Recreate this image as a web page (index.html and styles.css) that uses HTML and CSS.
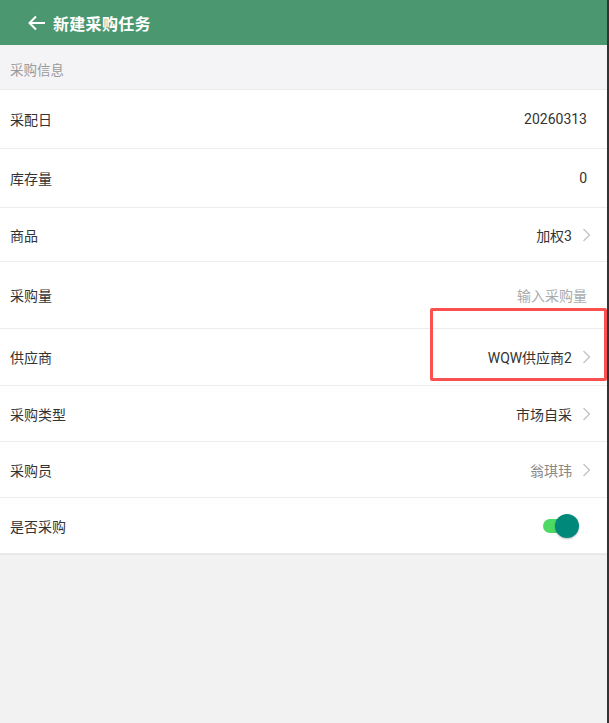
FILE: index.html
```html
<!DOCTYPE html>
<html lang="zh-CN">
<head>
  <meta charset="UTF-8" />
  <title>新建采购任务</title>
  <link rel="stylesheet" href="styles.css">
</head>
<body>
<div class="screen">
  <div class="topbar">
    <svg class="back" width="18" height="16" viewBox="0 0 18 16">
      <path d="M17 8H2M8 1.5L1.5 8L8 14.5" fill="none" stroke="#fff" stroke-width="2"/>
    </svg>
    <span class="title">新建采购任务</span>
  </div>

  <div class="section">采购信息</div>

  <div class="form">
    <div class="row h59">
      <span class="label">采配日</span>
      <span class="value">20260313</span>
    </div>
    <div class="row h59">
      <span class="label">库存量</span>
      <span class="value">0</span>
    </div>
    <div class="row h54">
      <span class="label">商品</span>
      <span class="value link">加权3<svg class="chev" width="9" height="14" viewBox="0 0 9 14"><path d="M1.5 1l6 6-6 6" fill="none" stroke="#c4c4c4" stroke-width="1.4"/></svg></span>
    </div>
    <div class="row h67">
      <span class="label">采购量</span>
      <span class="value hint">输入采购量</span>
    </div>
    <div class="row h57">
      <span class="label">供应商</span>
      <span class="value link">WQW供应商2<svg class="chev" width="9" height="14" viewBox="0 0 9 14"><path d="M1.5 1l6 6-6 6" fill="none" stroke="#c4c4c4" stroke-width="1.4"/></svg></span>
    </div>
    <div class="row h56">
      <span class="label">采购类型</span>
      <span class="value link">市场自采<svg class="chev" width="9" height="14" viewBox="0 0 9 14"><path d="M1.5 1l6 6-6 6" fill="none" stroke="#c4c4c4" stroke-width="1.4"/></svg></span>
    </div>
    <div class="row h56">
      <span class="label">采购员</span>
      <span class="value link muted">翁琪玮<svg class="chev" width="9" height="14" viewBox="0 0 9 14"><path d="M1.5 1l6 6-6 6" fill="none" stroke="#c4c4c4" stroke-width="1.4"/></svg></span>
    </div>
    <div class="row h56">
      <span class="label">是否采购</span>
      <span class="switch"><span class="knob"></span></span>
    </div>

    <div class="mark"></div>
  </div>
</div>
<div class="edge"></div>
</body>
</html>
```

FILE: styles.css
```css
body {
  margin: 0;
  background-color: #f2f2f2;
  font-family: Roboto, "Noto Sans CJK SC", sans-serif;
  color: #333;
  display: flex;
  min-height: 723px;
}
.screen {
  width: 607px;
  background-color: #f2f2f2;
}
.edge {
  width: 2px;
  background-color: #333;
}
.topbar {
  height: 45px;
  background-color: #4b9870;
  display: flex;
  align-items: center;
  padding-left: 28px;
  gap: 7px;
  box-shadow: 0 1px 2px rgba(0, 0, 0, 0.12);
}
.topbar .back {
  display: block;
}
.title {
  color: #fff;
  font-size: 16px;
  font-weight: bold;
  letter-spacing: 0.3px;
}
.section {
  height: 45px;
  background-color: #f4f4f7;
  color: #999;
  font-size: 13.5px;
  display: flex;
  align-items: center;
  padding: 4px 0 0 10px;
  border-bottom: 1px solid #ebebeb;
  box-sizing: border-box;
}
.form {
  position: relative;
  background-color: #fff;
  border-bottom: 1px solid #e6e6e6;
}
.row {
  display: flex;
  align-items: center;
  justify-content: space-between;
  padding: 0 20px 0 10px;
  border-bottom: 1px solid #ececec;
  box-sizing: border-box;
  font-size: 14px;
}
.row:last-of-type {
  border-bottom: none;
}
.h59 { height: 59px; }
.h54 { height: 54px; }
.h67 { height: 67px; }
.h57 { height: 57px; }
.h56 { height: 56px; }
.label {
  color: #333;
}
.value {
  color: #333;
  display: flex;
  align-items: center;
}
.value.link {
  margin-right: -4px;
}
.hint {
  color: #aaa;
}
.muted {
  color: #888;
}
.chev {
  display: block;
  margin-left: 10px;
}
.switch {
  width: 32px;
  height: 14px;
  border-radius: 7px;
  background-color: #4cd964;
  position: relative;
  margin-right: 12px;
}
.knob {
  position: absolute;
  right: -4px;
  top: -5px;
  width: 24px;
  height: 24px;
  border-radius: 50%;
  background-color: #00897b;
  box-shadow: 0 1px 2px rgba(0, 0, 0, 0.25);
}
.mark {
  position: absolute;
  left: 430px;
  top: 218px;
  width: 177px;
  height: 73px;
  border: 3px solid #fa5050;
  border-radius: 2px;
  box-sizing: border-box;
}
```
